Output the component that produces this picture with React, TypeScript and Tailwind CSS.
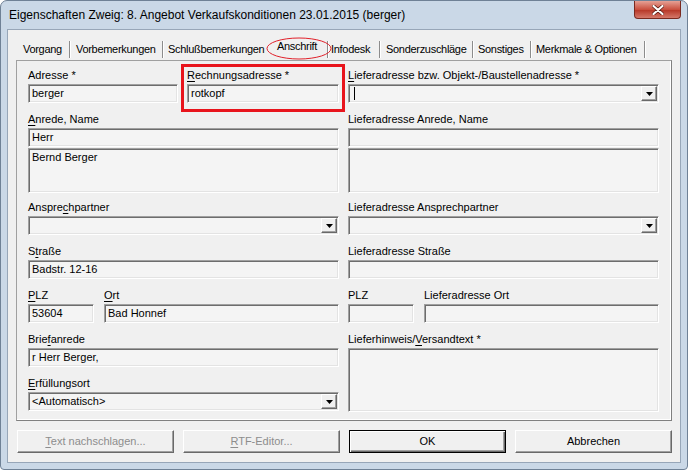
import React from 'react';

type Tab = { label: string; cls: string; active?: boolean; sep?: boolean };

const tabs: Tab[] = [
  { label: 'Vorgang', cls: 'w-[53px] pl-[6px]', sep: true },
  { label: 'Vorbemerkungen', cls: 'w-[93px] pl-[6px]', sep: true },
  { label: 'Schlußbemerkungen', cls: 'w-[105px] pl-[5px]' },
  { label: 'Anschrift', cls: 'w-[60px] pl-[9px]', active: true, sep: true },
  { label: 'Infodesk', cls: 'w-[52px] pl-[3px]', sep: true },
  { label: 'Sonderzuschläge', cls: 'w-[93px] pl-[6px]', sep: true },
  { label: 'Sonstiges', cls: 'w-[58px] pl-[5px]', sep: true },
  { label: 'Merkmale & Optionen', cls: 'w-[114px] pl-[5px]', sep: true },
];

// eingesunkener Rahmen (Textfeld / Kombifeld)
const sunken =
  'border border-t-[#a0a0a0] border-l-[#a0a0a0] border-r-[#ffffff] border-b-[#ffffff] shadow-[inset_1px_1px_0_#6d6d6d,inset_-1px_-1px_0_#e3e3e3] bg-[#f4f4f4]';

function U({ children }: { children: React.ReactNode }) {
  return <span className="underline decoration-1 underline-offset-[2px]">{children}</span>;
}

function Label({ children, className = '' }: { children: React.ReactNode; className?: string }) {
  return <div className={`h-[13px] leading-[13px] whitespace-nowrap ${className}`}>{children}</div>;
}

function TextInput({ value = '', className = '' }: { value?: string; className?: string }) {
  return <div className={`${sunken} h-[19px] pl-[3px] leading-[17px] whitespace-nowrap ${className}`}>{value}</div>;
}

function TextArea({ value = '', className = '' }: { value?: string; className?: string }) {
  return <div className={`${sunken} pl-[3px] pt-[2px] leading-[13px] ${className}`}>{value}</div>;
}

function DropButton() {
  return (
    <div className="w-[16px] h-[15px] flex items-center justify-center bg-[#f0f0f0] border border-t-[#ffffff] border-l-[#ffffff] border-b-[#696969] border-r-[#696969] shadow-[inset_-1px_-1px_0_#a0a0a0]">
      <svg width="7" height="4" viewBox="0 0 7 4">
        <path d="M0 0h7L3.5 4z" fill="#000" />
      </svg>
    </div>
  );
}

function Combo({ value = '', caret = false }: { value?: string; caret?: boolean }) {
  return (
    <div className={`${sunken} h-[19px] flex items-center justify-between pl-[3px] pr-[1px]`}>
      <span className="flex items-center whitespace-nowrap">
        {caret && <span className="ml-[2px] w-px h-[13px] bg-black" />}
        {value}
      </span>
      <DropButton />
    </div>
  );
}

function Button({ children, disabled = false, isDefault = false }: { children: React.ReactNode; disabled?: boolean; isDefault?: boolean }) {
  const frame = isDefault
    ? 'border border-black shadow-[inset_1px_1px_0_#ffffff,inset_-1px_-1px_0_#696969,inset_-2px_-2px_0_#a0a0a0]'
    : 'border border-t-[#ffffff] border-l-[#ffffff] border-b-[#696969] border-r-[#696969] shadow-[inset_-1px_-1px_0_#a0a0a0]';
  return (
    <div className={`w-[157px] h-[23px] flex items-center justify-center bg-[#f0f0f0] ${frame} ${disabled ? 'text-[#8d8d8d]' : 'text-black'}`}>
      {children}
    </div>
  );
}

export default function App() {
  return (
    <div className="relative w-[688px] h-[470px] bg-[#cad8e7] border border-[#6f8196] rounded-t-[7px] rounded-b-[4px] overflow-hidden font-[Liberation_Sans,Arial,sans-serif] text-[11px] text-black">
      {/* Titelleiste */}
      <div className="h-[28px] flex items-start justify-between">
        <div className="pl-[8px] pt-[6px] text-[12px] leading-[16px] whitespace-nowrap">
          Eigenschaften Zweig: 8. Angebot Verkaufskonditionen 23.01.2015 (berger)
        </div>
        <div className="mr-[6px] w-[47px] h-[18px] rounded-b-[4px] border border-t-0 border-[#7a2a20] bg-[linear-gradient(#e6a195,#c9503f_50%,#b83a2a_55%,#d4786a)] flex items-center justify-center">
          <svg width="12" height="10" viewBox="0 0 12 10">
            <path d="M1.5 1l9 8M10.5 1l-9 8" stroke="#5a1c14" strokeWidth="3.6" strokeLinecap="round" />
            <path d="M1.5 1l9 8M10.5 1l-9 8" stroke="#ffffff" strokeWidth="2.2" strokeLinecap="round" />
          </svg>
        </div>
      </div>

      {/* Client-Bereich */}
      <div className="ml-[6px] w-[674px] h-[434px] border border-[#97a6b8] bg-[#f0f0f0]">
        {/* Registerkarten */}
        <div className="h-[30px] pt-[11px] pl-[9px] flex tracking-[-0.3px]">
          {tabs.map((t) => (
            <div
              key={t.label}
              className={`h-[17px] leading-[17px] whitespace-nowrap ${t.cls} ${t.sep ? 'border-r border-r-[#8c8c8c] shadow-[1px_0_0_#ffffff]' : ''}`}
            >
              <span className={t.active ? 'inline-block -translate-y-[3px]' : ''}>{t.label}</span>
            </div>
          ))}
        </div>

        {/* Seite Anschrift */}
        <div className="ml-[8px] w-[656px] h-[361px] border border-t-[#a0a0a0] border-l-[#a0a0a0] border-b-[#808080] border-r-[#808080] shadow-[inset_-1px_-1px_0_#ffffff] pl-[11px] pt-[8px] flex gap-[9px]">
          {/* linke Spalte */}
          <div className="w-[311px] flex flex-col">
            <div className="flex gap-[9px]">
              <div className="w-[150px] flex flex-col gap-[2px]">
                <Label>Adresse *</Label>
                <TextInput value="berger" />
              </div>
              <div className="w-[152px] flex flex-col gap-[2px]">
                <Label>
                  <U>R</U>echnungsadresse *
                </Label>
                <TextInput value="rotkopf" />
              </div>
            </div>

            <Label className="mt-[10px]">
              <U>A</U>nrede, Name
            </Label>
            <TextInput value="Herr" className="mt-[2px]" />
            <TextArea value="Bernd Berger" className="mt-[1px] h-[45px]" />

            <Label className="mt-[8px]">
              Anspre<U>c</U>hpartner
            </Label>
            <div className="mt-[2px]">
              <Combo />
            </div>

            <Label className="mt-[10px]">
              S<U>t</U>raße
            </Label>
            <TextInput value="Badstr. 12-16" className="mt-[2px]" />

            <div className="mt-[10px] flex gap-[10px]">
              <div className="w-[66px] flex flex-col gap-[2px]">
                <Label>
                  <U>P</U>LZ
                </Label>
                <TextInput value="53604" />
              </div>
              <div className="flex-1 flex flex-col gap-[2px]">
                <Label>
                  <U>O</U>rt
                </Label>
                <TextInput value="Bad Honnef" />
              </div>
            </div>

            <Label className="mt-[10px]">
              Brie<U>f</U>anrede
            </Label>
            <TextInput value="r Herr Berger," className="mt-[2px]" />

            <Label className="mt-[10px]">
              <U>E</U>rfüllungsort
            </Label>
            <div className="mt-[2px]">
              <Combo value="<Automatisch>" />
            </div>
          </div>

          {/* rechte Spalte */}
          <div className="w-[311px] flex flex-col">
            <Label>
              <U>L</U>ieferadresse bzw. Objekt-/Baustellenadresse *
            </Label>
            <div className="mt-[2px]">
              <Combo caret />
            </div>

            <Label className="mt-[10px]">Lieferadresse Anrede, Name</Label>
            <TextInput className="mt-[2px]" />
            <TextArea className="mt-[1px] h-[45px]" />

            <Label className="mt-[8px]">Lieferadresse Ansprechpartner</Label>
            <div className="mt-[2px]">
              <Combo />
            </div>

            <Label className="mt-[10px]">Lieferadresse Straße</Label>
            <TextInput className="mt-[2px]" />

            <div className="mt-[10px] flex gap-[10px]">
              <div className="w-[66px] flex flex-col gap-[2px]">
                <Label>PLZ</Label>
                <TextInput />
              </div>
              <div className="flex-1 flex flex-col gap-[2px]">
                <Label>Lieferadresse Ort</Label>
                <TextInput />
              </div>
            </div>

            <Label className="mt-[10px]">
              Lieferhinweis/<U>V</U>ersandtext *
            </Label>
            <TextArea className="mt-[2px] h-[64px]" />
          </div>
        </div>

        {/* Schaltflächen */}
        <div className="mt-[9px] ml-[9px] flex gap-[9px]">
          <Button disabled>
            <span>
              <U>T</U>ext nachschlagen...
            </span>
          </Button>
          <Button disabled>
            <span>
              <U>R</U>TF-Editor...
            </span>
          </Button>
          <Button isDefault>OK</Button>
          <Button>Abbrechen</Button>
        </div>
      </div>

      {/* Markierungen */}
      <svg className="absolute left-[265px] top-[36px]" width="66" height="23" viewBox="0 0 66 23">
        <ellipse cx="33" cy="11.5" rx="32" ry="10.5" fill="none" stroke="#e0202a" strokeWidth="1" />
      </svg>
      <div className="absolute left-[180px] top-[63px] w-[164px] h-[48px] border-[3px] border-[#e8141c]" />
    </div>
  );
}
